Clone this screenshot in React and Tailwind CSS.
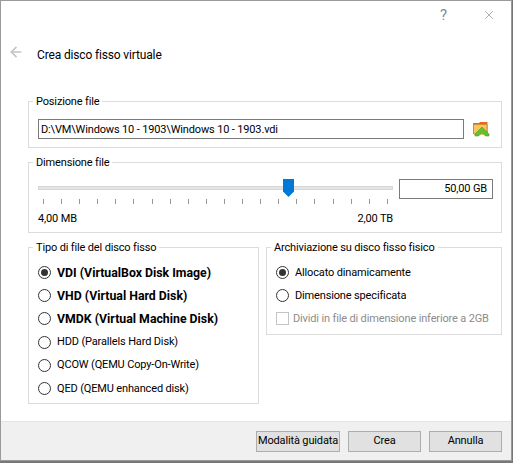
import React from "react";
import { ArrowLeft, X } from "lucide-react";

const ticks = Array.from({ length: 20 });

const Radio = ({ label, checked, bold }) => (
  <div className="flex items-center h-[23.2px]">
    <span className="w-[13px] h-[13px] rounded-full border border-[#333] bg-white flex items-center justify-center shrink-0">
      {checked && <span className="w-[7px] h-[7px] rounded-full bg-[#333]" />}
    </span>
    <span className={`ml-[6px] ${bold ? "font-bold text-[12.3px] tracking-normal" : ""}`}>{label}</span>
  </div>
);

const Group = ({ title, className, children }) => (
  <fieldset className={`border border-[#dcdcdc] shrink-0 ${className}`}>
    <legend className="ml-[4px] px-[3px] h-[16px] leading-[18px]">{title}</legend>
    {children}
  </fieldset>
);

const FolderIcon = () => (
  <svg width="18" height="18" viewBox="0 0 18 18">
    <path d="M1 3h6l1-1h7.500v12H1z" fill="#e8672a" />
    <path d="M1.500 4.500h13.500v9.500H1.500z" fill="#f8c661" stroke="#d98a2b" strokeWidth="1" />
    <path d="M10 7L17 14v2H13.500L10 12.500L6.500 16H3v-2z" fill="#63c22b" stroke="#4d9e1f" strokeWidth="0.6" />
  </svg>
);

export default function App() {
  return (
    <div className="w-[513px] h-[463px] bg-[#777] overflow-hidden text-[11px] leading-[16px] tracking-[-0.15px] text-black font-['Roboto','Noto_Sans',sans-serif]">
      <div className="w-[512px] h-[461px] bg-white border border-[#9a9a9a] flex flex-col">
        <div className="flex justify-end items-center h-[28px] text-[#8a8a8a]">
          <span className="text-[15px] mr-[35px]">?</span>
          <X size={14} strokeWidth={1} className="mr-[15px] text-[#777]" />
        </div>

        <div className="flex items-center h-[49px] pl-[7px]">
          <ArrowLeft size={16} strokeWidth={2.5} className="text-[#c4c4c4] -mt-[4px]" />
          <span className="ml-[13px] mt-[2px] text-[12px]">Crea disco fisso virtuale</span>
        </div>

        <div className="flex flex-col pl-[27px] pr-[9px] flex-1">
          <Group title="Posizione file" className="mt-[15px] h-[55px] w-[474px]">
            <div className="flex items-center mt-[10px] pl-[9px]">
              <div className="w-[426px] h-[20px] border border-[#7a7a7a] px-[2px] leading-[20px] whitespace-nowrap">
                D:\VM\Windows 10 - 1903\Windows 10 - 1903.vdi
              </div>
              <span className="ml-[8px] block"><FolderIcon /></span>
            </div>
          </Group>

          <Group title="Dimensione file" className="mt-[6px] h-[79px] w-[474px]">
            <div className="flex mt-[9px] pl-[9px]">
              <div className="w-[355px] relative">
                <div className="h-[4px] mt-[7px] bg-[#e3e5e5] border border-[#d6d6d6]" />
                <div className="absolute left-[245px] top-0 w-[11px] h-[18px] bg-[#0078d7] [clip-path:polygon(0_0,100%_0,100%_70%,50%_100%,0_70%)]" />
                <div className="flex justify-between mt-[9px] px-[5px]">
                  {ticks.map((_, i) => (
                    <span key={i} className="w-[1px] h-[5px] bg-[#9a9a90]" />
                  ))}
                </div>
                <div className="flex justify-between mt-[7px]">
                  <span>4,00 MB</span>
                  <span>2,00 TB</span>
                </div>
              </div>
              <div className="ml-[6px] w-[94px] h-[20px] border border-[#7a7a7a] text-right px-[5px] leading-[18px]">50,00 GB</div>
            </div>
          </Group>

          <div className="flex items-start mt-[6px] gap-[7px]">
            <Group title="Tipo di file del disco fisso" className="w-[231px] h-[165px]">
              <div className="mt-[6px] pl-[9px]">
                <Radio label="VDI (VirtualBox Disk Image)" checked bold />
                <Radio label="VHD (Virtual Hard Disk)" bold />
                <Radio label="VMDK (Virtual Machine Disk)" bold />
                <Radio label="HDD (Parallels Hard Disk)" />
                <Radio label="QCOW (QEMU Copy-On-Write)" />
                <Radio label="QED (QEMU enhanced disk)" />
              </div>
            </Group>
            <Group title="Archiviazione su disco fisso fisico" className="w-[236px] h-[96px]">
              <div className="mt-[6px] pl-[9px]">
                <Radio label="Allocato dinamicamente" checked />
                <Radio label="Dimensione specificata" />
                <div className="flex items-center h-[23px] text-[#8c8c8c] whitespace-nowrap">
                  <span className="w-[13px] h-[13px] border border-[#c4c4c4] shrink-0" />
                  <span className="ml-[4px]">Dividi in file di dimensione inferiore a 2GB</span>
                </div>
              </div>
            </Group>
          </div>
        </div>

        <div className="h-[39px] bg-[#f0f0f0] border-t border-[#e4e4e4] flex items-center justify-end pr-[9px] gap-[8px]">
          <button className="w-[84px] h-[21px] bg-[#e1e1e1] border border-[#adadad] whitespace-nowrap">Modalità guidata</button>
          <button className="w-[73px] h-[21px] bg-[#e1e1e1] border border-[#adadad]">Crea</button>
          <button className="w-[73px] h-[21px] bg-[#e1e1e1] border border-[#adadad]">Annulla</button>
        </div>
      </div>
    </div>
  );
}
